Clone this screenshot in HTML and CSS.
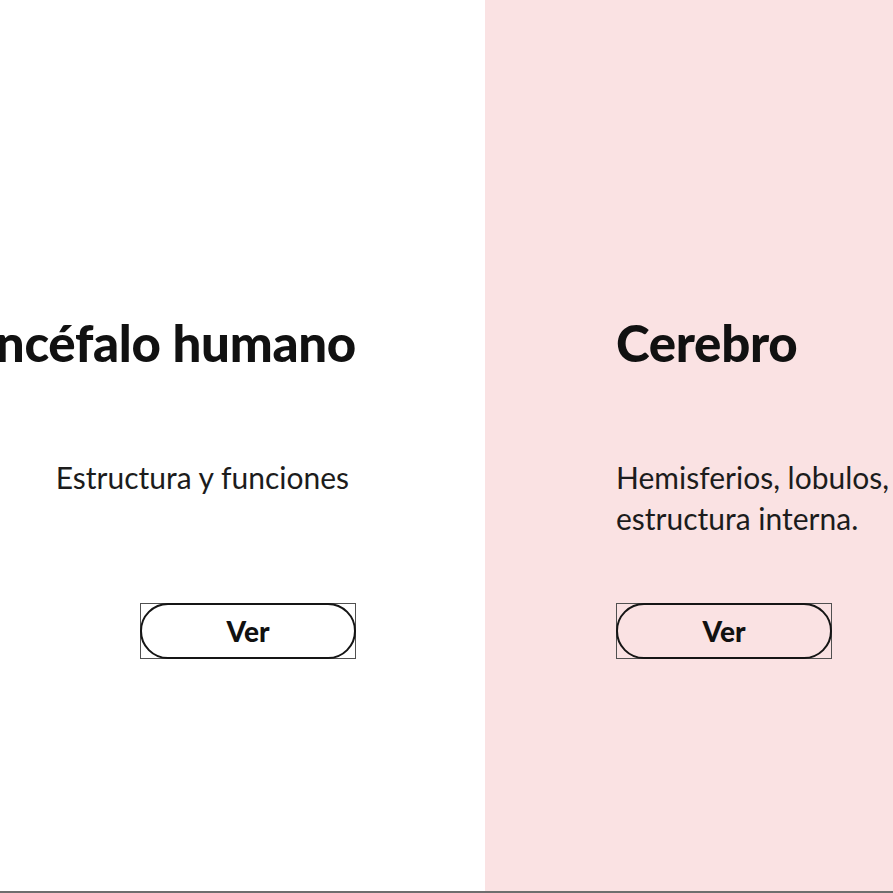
FILE: index.html
```html
<!DOCTYPE html>
<html lang="es">
<head>
  <meta charset="UTF-8" />
  <meta name="viewport" content="width=device-width, initial-scale=1.0"/>
  <title>Sistema nervioso</title>
  <link rel="stylesheet" href="styles.css">
</head>
<body>
  <div class="track">
    <section class="card card-left">
      <h2 class="card-title">Encéfalo humano</h2>
      <p class="card-text">Estructura y funciones</p>
      <div class="btn-frame">
        <button class="btn">Ver</button>
      </div>
    </section>

    <section class="card card-right">
      <h2 class="card-title">Cerebro</h2>
      <p class="card-text">Hemisferios, lobulos, estructura interna.</p>
      <div class="btn-frame">
        <button class="btn">Ver</button>
      </div>
    </section>
  </div>
  <div class="scroll-edge"></div>
</body>
</html>
```

FILE: styles.css
```css
* {
  box-sizing: border-box;
}
html, body {
  margin: 0;
  height: 100%;
}
body {
  font-family: 'Lato', sans-serif;
  color: #111;
  background: #fff;
  overflow: hidden;
  display: flex;
  flex-direction: column;
}
.track {
  flex: 1;
  display: flex;
  min-height: 0;
}
.card {
  flex: none;
  width: 485px;
  display: flex;
  flex-direction: column;
  padding-top: 318px;
}
.card-left {
  background: #fff;
  align-items: flex-end;
  padding-right: 129px;
}
.card-right {
  background: #fae2e3;
  width: 520px;
  align-items: flex-start;
  padding-left: 131px;
}
.card-title {
  margin: 0;
  font-size: 51px;
  font-weight: 900;
  line-height: 50px;
  white-space: nowrap;
  letter-spacing: -0.3px;
}
.card-text {
  margin: 89px 0 0;
  font-size: 30px;
  line-height: 41px;
  color: #1c1c1c;
  min-height: 82px;
  width: 290px;
}
.card-left .card-text {
  width: auto;
  margin-right: 7px;
}
.btn-frame {
  display: flex;
  margin-top: 64px;
  border: 1px solid #505050;
}
.btn {
  margin: -1px;
  width: 216px;
  height: 56px;
  border: 2px solid #151515;
  border-radius: 28px;
  background: transparent;
  font-family: 'Lato', sans-serif;
  font-size: 28px;
  font-weight: 900;
  color: #111;
  cursor: pointer;
}
.scroll-edge {
  flex: none;
  height: 2px;
  background: #6e6e6e;
  box-shadow: 0 -8px 24px rgba(0,0,0,0.05);
}
```
